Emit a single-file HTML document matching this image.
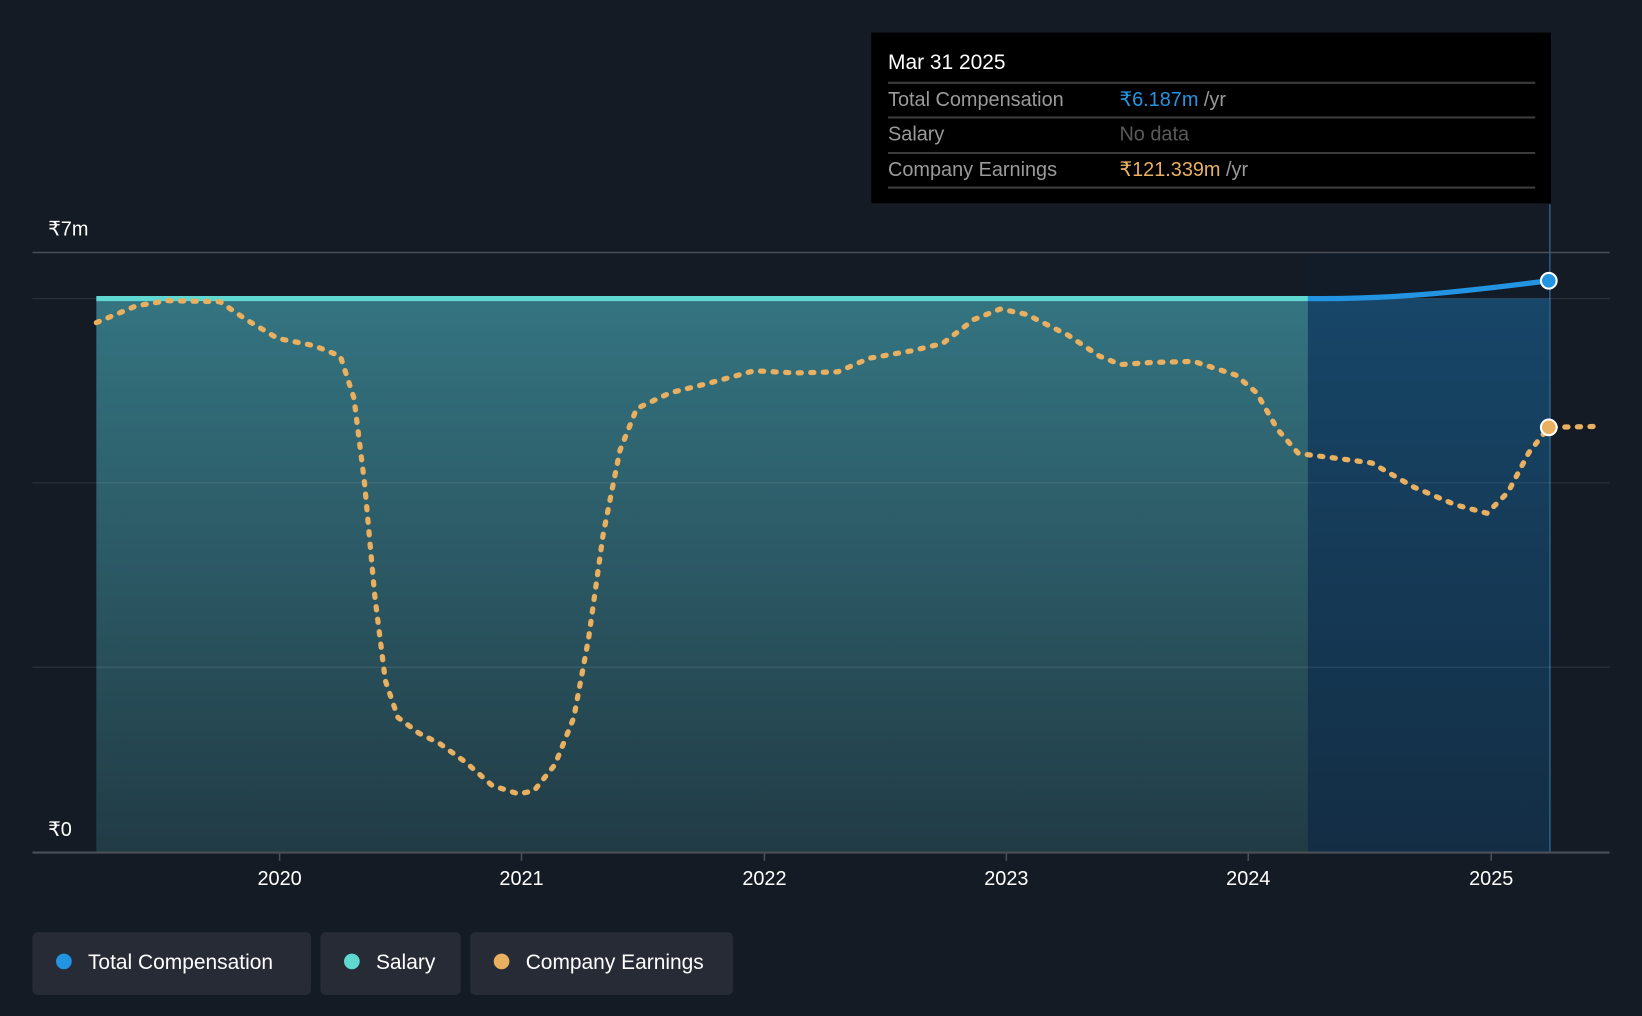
<!DOCTYPE html>
<html><head><meta charset="utf-8"><style>
html,body{margin:0;padding:0;background:#151b24;overflow:hidden}
svg{display:block}
text{font-family:"Liberation Sans",sans-serif}
</style></head><body>
<svg width="1642" height="1016" viewBox="0 0 1568 970" xmlns="http://www.w3.org/2000/svg">
<defs>
<linearGradient id="g1" x1="0" y1="0" x2="0" y2="1">
<stop offset="0" stop-color="#347481"/><stop offset="1" stop-color="#213b45"/>
</linearGradient>
<linearGradient id="g2" x1="0" y1="0" x2="0" y2="1">
<stop offset="0" stop-color="#174668"/><stop offset="1" stop-color="#132d44"/>
</linearGradient>
</defs>
<rect width="1568" height="970" fill="#151b24"/>
<rect x="92" y="285" width="1157" height="529" fill="url(#g1)"/>
<rect x="1249" y="241" width="232" height="44" fill="#121c28"/>
<rect x="1249" y="285" width="232" height="529" fill="url(#g2)"/>
<line x1="1480" y1="195" x2="1480" y2="814" stroke="#2a5b80" stroke-width="1.5"/>
<line x1="31" y1="241" x2="1537" y2="241" stroke="#4a4f57" stroke-width="1.5"/>
<line x1="31" y1="285" x2="1537" y2="285" stroke="#ffffff" stroke-opacity="0.1"/>
<line x1="31" y1="461" x2="1537" y2="461" stroke="#ffffff" stroke-opacity="0.1"/>
<line x1="31" y1="637" x2="1537" y2="637" stroke="#ffffff" stroke-opacity="0.1"/>
<line x1="31" y1="814" x2="1537" y2="814" stroke="#4a4f57" stroke-width="2"/>
<g stroke="#4a4f57" stroke-width="1.5">
<line x1="267" y1="814" x2="267" y2="822"/><line x1="498" y1="814" x2="498" y2="822"/>
<line x1="730" y1="814" x2="730" y2="822"/><line x1="961" y1="814" x2="961" y2="822"/>
<line x1="1192" y1="814" x2="1192" y2="822"/><line x1="1424" y1="814" x2="1424" y2="822"/>
</g>
<text x="46" y="225" fill="#fff" font-size="19">₹7m</text>
<text x="46" y="798" fill="#fff" font-size="19">₹0</text>
<g fill="#fff" font-size="19" text-anchor="middle">
<text x="267" y="845">2020</text><text x="498" y="845">2021</text><text x="730" y="845">2022</text>
<text x="961" y="845">2023</text><text x="1192" y="845">2024</text><text x="1424" y="845">2025</text>
</g>
<line x1="92" y1="285" x2="1249" y2="285" stroke="#5ed8d0" stroke-width="5"/>
<path d="M1249 285 C1330 286 1400 278 1479 268" fill="none" stroke="#2394e2" stroke-width="5"/>
<polyline fill="none" stroke="#e8b060" stroke-width="5" stroke-linecap="round" stroke-linejoin="round" stroke-dasharray="3 9"
points="92,308 130,292 160,287 210,288 235,305 265,323 300,330 325,340 338,380 348,460 358,570 368,650 380,685 400,700 420,710 445,728 470,750 495,758 510,755 530,730 548,685 562,610 576,510 592,430 608,390 640,375 680,365 720,354 760,356 800,355 830,342 870,335 900,328 930,305 955,295 980,300 1020,320 1050,340 1070,348 1100,346 1140,345 1180,358 1200,375 1220,410 1240,433 1280,438 1310,442 1350,465 1390,482 1420,490 1440,470 1460,432 1479,408 1530,407"/>
<circle cx="1479" cy="268" r="7.5" fill="#2394e2" stroke="#fff" stroke-width="2"/>
<circle cx="1479" cy="408" r="7.5" fill="#e8b060" stroke="#fff" stroke-width="2"/>
<rect x="832" y="31" width="649" height="163" fill="#000"/>
<text x="848" y="66" fill="#fff" font-size="20">Mar 31 2025</text>
<g stroke="#3c3c3c" stroke-width="2">
<line x1="848" y1="79" x2="1466" y2="79"/><line x1="848" y1="112" x2="1466" y2="112"/>
<line x1="848" y1="146" x2="1466" y2="146"/><line x1="848" y1="179" x2="1466" y2="179"/>
</g>
<g font-size="19">
<text x="848" y="101" fill="#9a9a9a">Total Compensation</text>
<text x="1069" y="101" fill="#2394e2">₹6.187m <tspan fill="#9a9a9a">/yr</tspan></text>
<text x="848" y="134" fill="#9a9a9a">Salary</text>
<text x="1069" y="134" fill="#5a5a5a">No data</text>
<text x="848" y="168" fill="#9a9a9a">Company Earnings</text>
<text x="1069" y="168" fill="#e8b060">₹121.339m <tspan fill="#9a9a9a">/yr</tspan></text>
</g>
<rect x="31" y="890" width="266" height="60" rx="5" fill="#262b35"/>
<rect x="306" y="890" width="134" height="60" rx="5" fill="#262b35"/>
<rect x="449" y="890" width="251" height="60" rx="5" fill="#262b35"/>
<circle cx="61" cy="918" r="7.5" fill="#2394e2"/>
<circle cx="336" cy="918" r="7.5" fill="#5ed8d0"/>
<circle cx="479" cy="918" r="7.5" fill="#e8b060"/>
<g fill="#fff" font-size="20">
<text x="84" y="925">Total Compensation</text>
<text x="359" y="925">Salary</text>
<text x="502" y="925">Company Earnings</text>
</g>
</svg>
</body></html>
